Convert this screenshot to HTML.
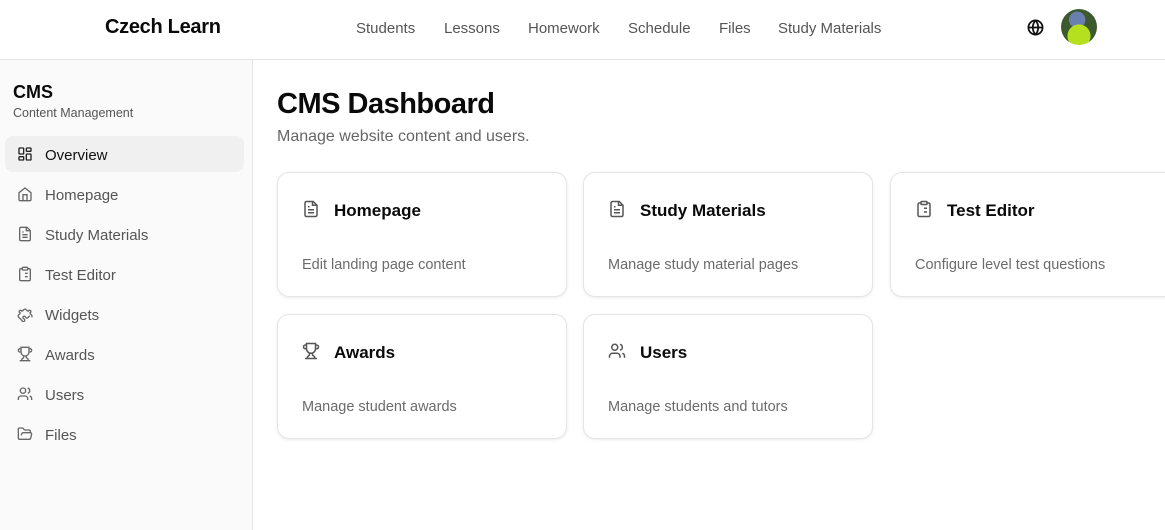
<!DOCTYPE html>
<html><head><meta charset="utf-8"><style>
*{box-sizing:border-box;margin:0;padding:0}
body{width:1165px;height:530px;overflow:hidden;font-family:"Liberation Sans",sans-serif;background:#fff;color:#0a0a0a;position:relative}
.hdr{position:absolute;left:0;top:0;width:1165px;height:60px;border-bottom:1px solid #e5e5e5;background:#fff}
.logo{position:absolute;left:105px;top:16px;font-size:20px;font-weight:bold;letter-spacing:-0.3px}
.nav{position:absolute;top:20px;font-size:15px;color:#555}
.side{position:absolute;left:0;top:60px;width:253px;height:470px;background:#fafafa;border-right:1px solid #e5e5e5}
.side h2{position:absolute;left:13px;top:22px;font-size:18px;font-weight:bold}
.side .sub{position:absolute;left:13px;top:46px;font-size:12.5px;color:#555}
.item{position:absolute;left:5px;width:239px;height:36px;border-radius:8px;font-size:15px;color:#555}
.item svg{position:absolute;left:12px;top:10px}
.item span{position:absolute;left:40px;top:11px}
.item.act{background:#f0f0f0;color:#111}
.main h1{position:absolute;left:277px;top:88px;font-size:29px;font-weight:bold;letter-spacing:-0.5px}
.main .p{position:absolute;left:277px;top:128px;font-size:16px;color:#666}
.card{position:absolute;width:290px;height:125px;border:1px solid #e5e5e5;border-radius:12px;background:#fff;box-shadow:0 1px 3px rgba(0,0,0,0.08)}
.card svg{position:absolute;left:24px;top:27px}
.card b{position:absolute;left:56px;top:28px;font-size:17px}
.card .d{position:absolute;left:24px;top:84px;font-size:14.5px;color:#6b6b6b}
</style></head><body>
<div class="hdr">
<div class="logo">Czech Learn</div>
<div class="nav" style="left:356px">Students</div>
<div class="nav" style="left:444px">Lessons</div>
<div class="nav" style="left:528px">Homework</div>
<div class="nav" style="left:628px">Schedule</div>
<div class="nav" style="left:719px">Files</div>
<div class="nav" style="left:778px">Study Materials</div>
<svg style="position:absolute;left:1027px;top:19px" width="17" height="17" viewBox="0 0 24 24" fill="none" stroke="#111" stroke-width="2.5"><circle cx="12" cy="12" r="10"/><path d="M2 12h20M12 2a15 15 0 0 1 0 20M12 2a15 15 0 0 0 0 20"/></svg>
<div style="position:absolute;left:1061px;top:9px;width:36px;height:36px;border-radius:50%;background:radial-gradient(circle at 50% 75%,#b5e01f 0 35%,transparent 36%),radial-gradient(circle at 45% 30%,#6a7fb0 0 25%,transparent 26%),#3d5a2e"></div>
</div>
<div class="side">
<h2>CMS</h2><div class="sub">Content Management</div>
<div class="item act" style="top:76px"><svg width="16" height="16" viewBox="0 0 24 24" fill="none" stroke="#222" stroke-width="2"><rect x="3" y="3" width="7" height="9" rx="1"/><rect x="14" y="3" width="7" height="5" rx="1"/><rect x="14" y="12" width="7" height="9" rx="1"/><rect x="3" y="16" width="7" height="5" rx="1"/></svg><span>Overview</span></div>
<div class="item" style="top:116px"><svg width="16" height="16" viewBox="0 0 24 24" fill="none" stroke="#666" stroke-width="2"><path d="M15 21v-8H9v8"/><path d="M3 10l9-7 9 7v10a2 2 0 0 1-2 2H5a2 2 0 0 1-2-2z"/></svg><span>Homepage</span></div>
<div class="item" style="top:156px"><svg width="16" height="16" viewBox="0 0 24 24" fill="none" stroke="#666" stroke-width="2"><path d="M15 2H6a2 2 0 0 0-2 2v16a2 2 0 0 0 2 2h12a2 2 0 0 0 2-2V7z"/><path d="M14 2v5h5M8 13h8M8 17h8M8 9h2"/></svg><span>Study Materials</span></div>
<div class="item" style="top:196px"><svg width="16" height="16" viewBox="0 0 24 24" fill="none" stroke="#666" stroke-width="2"><rect x="8" y="2" width="8" height="4" rx="1"/><path d="M16 4h2a2 2 0 0 1 2 2v14a2 2 0 0 1-2 2H6a2 2 0 0 1-2-2V6a2 2 0 0 1 2-2h2M12 11h4M12 16h4M8 11h.01M8 16h.01"/></svg><span>Test Editor</span></div>
<div class="item" style="top:236px"><svg width="16" height="16" viewBox="0 0 24 24" fill="none" stroke="#666" stroke-width="2"><path d="M19.4 15c-.6 0-1 .4-1.4.8l-1.6 1.6a2.4 2.4 0 0 1-1.7.7c-.9 0-1.6-.8-1.9-1.4a2 2 0 1 0-2.5 2.5c.6.3 1.4 1 1.4 1.9 0 .6-.2 1.2-.7 1.7l-1.6 1.6L6.7 21 4 18.3l-1.6-1.6a2.4 2.4 0 0 1 0-3.4l1.6-1.6c.4-.4.8-1 .8-1.4a2 2 0 1 1 2.5-2.5c.4 0 1-.4 1.4-.8l1.6-1.6a2.4 2.4 0 0 1 3.4 0l1.6 1.6c.4.4 1 .8 1.6.8a2 2 0 1 1 2.5 2.5c0 .6.4 1.2.8 1.6l1.6 1.6a2.4 2.4 0 0 1 0 3.4"/></svg><span>Widgets</span></div>
<div class="item" style="top:276px"><svg width="16" height="16" viewBox="0 0 24 24" fill="none" stroke="#666" stroke-width="2"><path d="M6 9H4.5a2.5 2.5 0 0 1 0-5H6M18 9h1.5a2.5 2.5 0 0 0 0-5H18M4 22h16M10 14.7V17c0 .6-.5 1-1 1.2C7.8 18.8 7 20.2 7 22M14 14.7V17c0 .6.5 1 1 1.2 1.2.5 2 2 2 3.8M18 2H6v7a6 6 0 0 0 12 0z"/></svg><span>Awards</span></div>
<div class="item" style="top:316px"><svg width="16" height="16" viewBox="0 0 24 24" fill="none" stroke="#666" stroke-width="2"><path d="M16 21v-2a4 4 0 0 0-4-4H6a4 4 0 0 0-4 4v2"/><circle cx="9" cy="7" r="4"/><path d="M22 21v-2a4 4 0 0 0-3-3.9M16 3.1a4 4 0 0 1 0 7.8"/></svg><span>Users</span></div>
<div class="item" style="top:356px"><svg width="16" height="16" viewBox="0 0 24 24" fill="none" stroke="#666" stroke-width="2"><path d="M6 14l1.5-2.9A2 2 0 0 1 9.2 10H20a2 2 0 0 1 1.9 2.5l-1.5 6a2 2 0 0 1-2 1.5H4a2 2 0 0 1-2-2V5a2 2 0 0 1 2-2h3.9a2 2 0 0 1 1.7.9l.8 1.2a2 2 0 0 0 1.7.9H18a2 2 0 0 1 2 2v2"/></svg><span>Files</span></div>
</div>
<div class="main">
<h1>CMS Dashboard</h1>
<div class="p">Manage website content and users.</div>
<div class="card" style="left:277px;top:172px"><svg width="18" height="18" viewBox="0 0 24 24" fill="none" stroke="#555" stroke-width="2"><path d="M15 2H6a2 2 0 0 0-2 2v16a2 2 0 0 0 2 2h12a2 2 0 0 0 2-2V7z"/><path d="M14 2v5h5M8 13h8M8 17h8M8 9h2"/></svg><b>Homepage</b><div class="d">Edit landing page content</div></div>
<div class="card" style="left:583px;top:172px"><svg width="18" height="18" viewBox="0 0 24 24" fill="none" stroke="#555" stroke-width="2"><path d="M15 2H6a2 2 0 0 0-2 2v16a2 2 0 0 0 2 2h12a2 2 0 0 0 2-2V7z"/><path d="M14 2v5h5M8 13h8M8 17h8M8 9h2"/></svg><b>Study Materials</b><div class="d">Manage study material pages</div></div>
<div class="card" style="left:890px;top:172px"><svg width="18" height="18" viewBox="0 0 24 24" fill="none" stroke="#555" stroke-width="2"><rect x="8" y="2" width="8" height="4" rx="1"/><path d="M16 4h2a2 2 0 0 1 2 2v14a2 2 0 0 1-2 2H6a2 2 0 0 1-2-2V6a2 2 0 0 1 2-2h2M12 11h4M12 16h4M8 11h.01M8 16h.01"/></svg><b>Test Editor</b><div class="d">Configure level test questions</div></div>
<div class="card" style="left:277px;top:314px"><svg width="18" height="18" viewBox="0 0 24 24" fill="none" stroke="#555" stroke-width="2"><path d="M6 9H4.5a2.5 2.5 0 0 1 0-5H6M18 9h1.5a2.5 2.5 0 0 0 0-5H18M4 22h16M10 14.7V17c0 .6-.5 1-1 1.2C7.8 18.8 7 20.2 7 22M14 14.7V17c0 .6.5 1 1 1.2 1.2.5 2 2 2 3.8M18 2H6v7a6 6 0 0 0 12 0z"/></svg><b>Awards</b><div class="d">Manage student awards</div></div>
<div class="card" style="left:583px;top:314px"><svg width="18" height="18" viewBox="0 0 24 24" fill="none" stroke="#555" stroke-width="2"><path d="M16 21v-2a4 4 0 0 0-4-4H6a4 4 0 0 0-4 4v2"/><circle cx="9" cy="7" r="4"/><path d="M22 21v-2a4 4 0 0 0-3-3.9M16 3.1a4 4 0 0 1 0 7.8"/></svg><b>Users</b><div class="d">Manage students and tutors</div></div>
</div>
</body></html>
